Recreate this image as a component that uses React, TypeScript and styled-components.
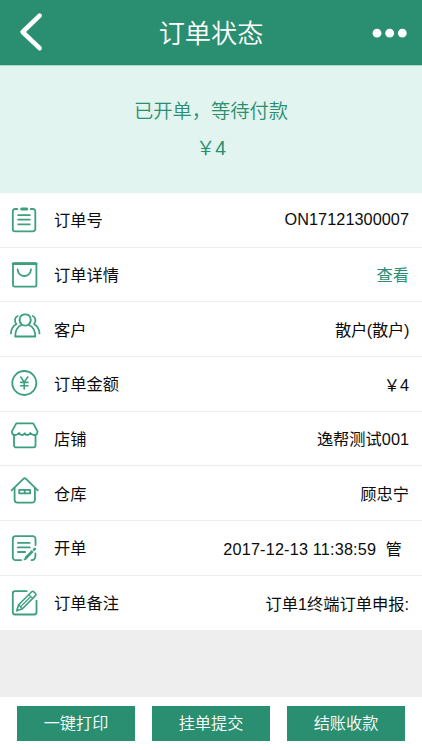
import React from 'react';
import styled, { createGlobalStyle } from 'styled-components';

const GREEN = '#2a8f70';

const GlobalStyle = createGlobalStyle`
  * { box-sizing: border-box; }
  body {
    margin: 0;
    background: #eee;
    font-family: 'Liberation Sans', 'Noto Sans CJK SC', sans-serif;
  }
`;

const Screen = styled.div`
  width: 422px;
  height: 750px;
  display: flex;
  flex-direction: column;
  overflow: hidden;
  background: #eee;
`;

const Header = styled.header`
  height: 65px;
  flex: none;
  display: grid;
  grid-template-columns: 80px 1fr 80px;
  align-items: center;
  background: ${GREEN};
  color: #fff;
`;

const HeaderButton = styled.button<{ $end?: boolean }>`
  height: 65px;
  padding: 0;
  border: 0;
  background: none;
  display: flex;
  justify-content: ${(p) => (p.$end ? 'flex-end' : 'flex-start')};
`;

const Title = styled.h1`
  margin: 0;
  padding-top: 3px;
  font-size: 26.2px;
  font-weight: 350;
  line-height: 62px;
  text-align: center;
`;

const Banner = styled.section`
  height: 128px;
  flex: none;
  padding-top: 28px;
  border-top: 1px solid #a6dcca;
  background: #e1f4ef;
  color: ${GREEN};
  text-align: center;
  font-size: 19.3px;
  font-weight: 350;
  line-height: 36.5px;
`;

const BannerLine = styled.div``;

const List = styled.ul`
  flex: none;
  margin: 0;
  padding: 0;
  list-style: none;
  background: #fff;
`;

const Row = styled.li`
  height: 54.66px;
  display: flex;
  align-items: center;
  padding: 0 13px 0 8px;
  border-bottom: 1px solid #ececec;
  font-size: 16.25px;
  color: #0c0c0c;
  &:last-child { border-bottom: 0; }
`;

const Icon = styled.svg`
  width: 32px;
  height: 32px;
  flex: none;
  margin-right: 14px;
  overflow: visible;
  fill: none;
  stroke: #3c9f7f;
  stroke-width: 1.8;
  stroke-linecap: round;
  stroke-linejoin: round;
`;

const Label = styled.span`
  flex: 1;
  padding-bottom: 1px;
`;

const Value = styled.span<{ $link?: boolean; $inset?: boolean; $tracking?: number }>`
  white-space: pre;
  color: ${(p) => (p.$link ? GREEN : 'inherit')};
  padding-right: ${(p) => (p.$inset ? '7px' : '0')};
  letter-spacing: ${(p) => p.$tracking ?? 0}px;
`;

const Footer = styled.footer`
  height: 53px;
  flex: none;
  margin-top: auto;
  padding: 9px 17px 0;
  display: flex;
  gap: 17px;
  background: #fff;
`;

const Action = styled.button`
  flex: 1;
  height: 35px;
  padding: 0;
  border: 0;
  background: ${GREEN};
  color: #fff;
  font-family: inherit;
  font-size: 16.2px;
  font-weight: 350;
  line-height: 35px;
`;

const icons: Record<string, React.ReactNode> = {
  clipboard: (
    <>
      <path d="M9.3 5H7.2A2.4 2.4 0 0 0 4.8 7.4V25A2.4 2.4 0 0 0 7.2 27.4H24.9A2.4 2.4 0 0 0 27.3 25V7.4A2.4 2.4 0 0 0 24.9 5H22.8" />
      <path d="M13.7 5H18.7" strokeWidth="3" />
      <path d="M10.2 11.2H21.8M10.2 15.7H21.8M10.2 20.3H21.8" />
    </>
  ),
  bag: (
    <>
      <rect x="5" y="5.2" width="23.4" height="23.5" rx="1.6" />
      <path d="M5 5.8H28.4" strokeWidth="2.4" />
      <path d="M9.6 11.4C10.4 20.2 22.2 20.2 23 11.4" />
    </>
  ),
  people: (
    <>
      <path d="M13.4 11.2C10.4 8.2 11.2 1.3 17.2 1.3S24 8.2 21 11.2C19 13.2 15.4 13.2 13.4 11.2Z" />
      <path d="M13.4 12C9.2 13.8 7.3 17.3 7.2 23.5H27.3C27.2 17.3 25.2 13.8 21 12" />
      <path d="M9.8 3C6.6 4 6 8.5 8.4 11.2C4.8 12.9 3.2 15.8 2.9 20.4" />
      <path d="M24.6 3C27.8 4 28.4 8.5 26 11.2C29.6 12.9 31.2 15.8 31.5 20.4" />
    </>
  ),
  yen: (
    <>
      <circle cx="16.3" cy="15" r="12" />
      <path d="M12.8 9L16.2 14.1L19.8 9M16.2 14.1V21M12.6 14.4H20M12.6 17.7H20" strokeWidth="1.6" />
    </>
  ),
  shop: (
    <>
      <path d="M8.3 1.4H25.2L29.5 9.4C29.5 11.7 28 13 26.3 13C24.6 13 23.2 12 22.4 11C21.6 12.2 20.6 13 19.4 13C18.2 13 17.3 12.3 16.7 11.2C16.1 12.3 15.2 13 14 13C12.8 13 11.8 12.2 11 11C10.2 12 8.8 13 7.1 13C5.4 13 3.9 11.7 3.9 9.4Z" />
      <path d="M6 13.4V23.3A2.1 2.1 0 0 0 8.1 25.4H25.4A2.1 2.1 0 0 0 27.5 23.3V13.4" />
    </>
  ),
  house: (
    <>
      <path d="M3.6 13.3L15.4 1.9Q16.7 .7 18 1.9L29.8 13.3" />
      <path d="M6.6 11.2V22.8A2.8 2.8 0 0 0 9.4 25.6H24.1A2.8 2.8 0 0 0 26.9 22.8V11.2" />
      <path d="M11.2 12.9H22.1V16.3H11.2ZM16.7 12.9V16.3" />
    </>
  ),
  note: (
    <>
      <path d="M13.2 28.1H7.6A2.8 2.8 0 0 1 4.8 25.3V6.9A2.8 2.8 0 0 1 7.6 4.1H24.7A2.8 2.8 0 0 1 27.5 6.9V13" />
      <path d="M9.9 10.8H21.8M9.9 15.4H21.8M9.9 20H17.2M23.6 28.1C25.8 28 27.3 26.7 27.4 24.2V21.4" />
      <path d="M17.5 26.2L24.7 19" strokeWidth="2.8" strokeLinecap="butt" />
      <path d="M26 17.7L26.9 16.8" strokeWidth="2.6" />
      <path d="M16.5 27.4L18 26.7" />
    </>
  ),
  edit: (
    <>
      <path d="M18.8 4.1H7A2.3 2.3 0 0 0 4.8 6.4V25.2A2.3 2.3 0 0 0 7 27.5H26.2A2.3 2.3 0 0 0 28.5 25.2V13.6" />
      <path d="M8.7 23.8L10.6 17.7L23.7 4.8Q24.7 3.8 25.8 4.8L27.5 6.6Q28.5 7.6 27.5 8.6L14.4 21.7Z" strokeWidth="1.6" />
      <path d="M20.9 7.6L24.8 11.4M10.6 17.7L14.4 21.7M13.3 18.9L22 10.3" strokeWidth="1.3" />
    </>
  ),
};

const rows = [
  { icon: 'clipboard', label: '订单号', value: 'ON17121300007', tracking: 0.05 },
  { icon: 'bag', label: '订单详情', value: '查看', link: true },
  { icon: 'people', label: '客户', value: '散户(散户)', tracking: -0.3 },
  { icon: 'yen', label: '订单金额', value: '￥4' },
  { icon: 'shop', label: '店铺', value: '逸帮测试001' },
  { icon: 'house', label: '仓库', value: '顾忠宁' },
  { icon: 'note', label: '开单', value: '2017-12-13 11:38:59  管', inset: true, tracking: 0.17 },
  { icon: 'edit', label: '订单备注', value: '订单1终端订单申报:' },
];

export default function App() {
  return (
    <Screen>
      <GlobalStyle />
      <Header>
        <HeaderButton aria-label="返回">
          <svg width="60" height="65" fill="none" stroke="#fff" strokeWidth="4.6" strokeLinecap="round" strokeLinejoin="round">
            <path d="M39.6 15.7L22.6 32L39.6 48.2" />
          </svg>
        </HeaderButton>
        <Title>订单状态</Title>
        <HeaderButton $end aria-label="更多">
          <svg width="60" height="65" fill="#fff">
            <circle cx="15" cy="33.2" r="4.4" />
            <circle cx="27.7" cy="33.2" r="4.4" />
            <circle cx="40.3" cy="33.2" r="4.4" />
          </svg>
        </HeaderButton>
      </Header>
      <Banner>
        <BannerLine>已开单，等待付款</BannerLine>
        <BannerLine>￥4</BannerLine>
      </Banner>
      <List>
        {rows.map((r) => (
          <Row key={r.label}>
            <Icon viewBox="0 0 32 32">{icons[r.icon]}</Icon>
            <Label>{r.label}</Label>
            <Value $link={r.link} $inset={r.inset} $tracking={r.tracking}>{r.value}</Value>
          </Row>
        ))}
      </List>
      <Footer>
        <Action>一键打印</Action>
        <Action>挂单提交</Action>
        <Action>结账收款</Action>
      </Footer>
    </Screen>
  );
}
